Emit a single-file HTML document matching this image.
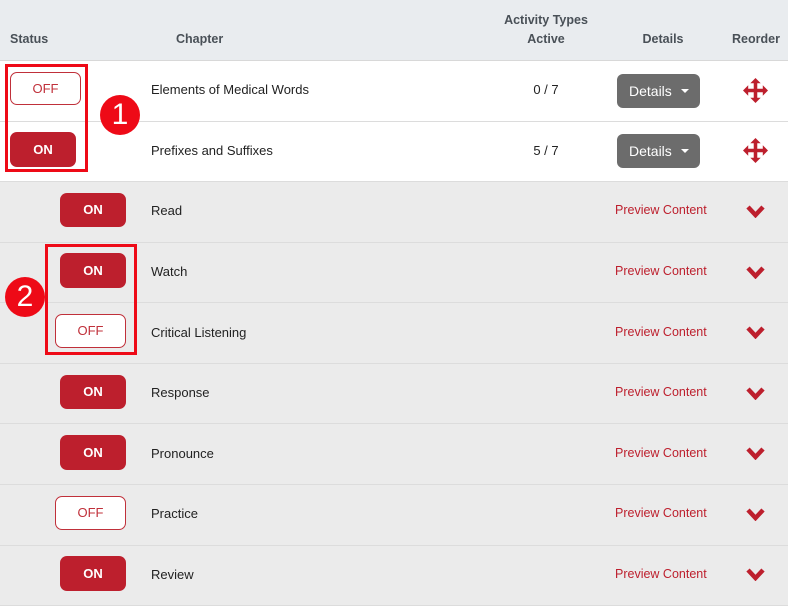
<!DOCTYPE html>
<html><head><style>
*{box-sizing:border-box;margin:0;padding:0}
body{width:788px;height:607px;position:relative;background:#fff;font-family:"Liberation Sans",sans-serif;overflow:hidden}
.a{position:absolute}
.hd{font-size:12.5px;font-weight:bold;color:#495057;text-align:center}
.row{position:absolute;left:0;width:788px;border-bottom:1px solid #dcdcdc}
.t{position:absolute;left:151px;font-size:13px;color:#222}
.on{position:absolute;background:#bd1f2d;color:#fff;font-size:13px;font-weight:bold;text-align:center;border-radius:7px}
.off{position:absolute;background:#fff;color:#c0303a;border:1px solid #c0303a;font-size:13px;text-align:center;border-radius:7px}
.pv{position:absolute;left:615px;font-size:12.5px;color:#bd1f2d}
.det{position:absolute;left:617px;width:83px;height:34px;background:#6c6c6c;border-radius:6px;color:#fff;font-size:14px;line-height:34px;padding-left:12px}
.det:after{content:"";position:absolute;left:64px;top:15px;border-left:4px solid transparent;border-right:4px solid transparent;border-top:4px solid #fff}
.circ{position:absolute;width:40px;height:40px;border-radius:50%;background:#ee0a17;color:#fff;font-size:30px;text-align:center;line-height:40px}
.box{position:absolute;border:3px solid #ee0a17}
</style></head><body>
<div class="a" style="left:0;top:0;width:788px;height:61px;background:#e9ecef;border-bottom:1px solid #d8d8d8"></div>
<div class="a hd" style="left:10px;top:32px;text-align:left">Status</div>
<div class="a hd" style="left:176px;top:32px;text-align:left">Chapter</div>
<div class="a hd" style="left:486px;top:13px;width:120px">Activity Types</div>
<div class="a hd" style="left:486px;top:32px;width:120px">Active</div>
<div class="a hd" style="left:623px;top:32px;width:80px">Details</div>
<div class="a hd" style="left:726px;top:32px;width:60px">Reorder</div>

<div class="row" style="top:61px;height:61px;background:#fff"></div>
<div class="row" style="top:122px;height:60px;background:#fff"></div>
<div class="row" style="top:182px;height:61px;background:#ebebeb"></div>
<div class="row" style="top:243px;height:60px;background:#ebebeb"></div>
<div class="row" style="top:303px;height:61px;background:#ebebeb"></div>
<div class="row" style="top:364px;height:60px;background:#ebebeb"></div>
<div class="row" style="top:424px;height:61px;background:#ebebeb"></div>
<div class="row" style="top:485px;height:61px;background:#ebebeb"></div>
<div class="row" style="top:546px;height:60px;background:#ebebeb"></div>

<div class="off" style="left:10px;top:72px;width:71px;height:33px;line-height:31px">OFF</div>
<div class="on" style="left:10px;top:132px;width:66px;height:35px;line-height:35px">ON</div>
<div class="t" style="top:82px">Elements of Medical Words</div>
<div class="t" style="top:143px">Prefixes and Suffixes</div>
<div class="a" style="left:506px;top:82px;width:80px;text-align:center;font-size:13px;color:#222">0 / 7</div>
<div class="a" style="left:506px;top:143px;width:80px;text-align:center;font-size:13px;color:#222">5 / 7</div>
<div class="det" style="top:74px">Details</div>
<div class="det" style="top:134px">Details</div>
<svg class="a" style="left:743px;top:78px" width="25" height="25" viewBox="0 0 24 24"><path d="M12 0l5 5h-3.3v5.3H19V7l5 5-5 5v-3.3h-5.3V19H17l-5 5-5-5h3.3v-5.3H5V17l-5-5 5-5v3.3h5.3V5H7z" fill="#bd1f2d"/></svg>
<svg class="a" style="left:743px;top:138px" width="25" height="25" viewBox="0 0 24 24"><path d="M12 0l5 5h-3.3v5.3H19V7l5 5-5 5v-3.3h-5.3V19H17l-5 5-5-5h3.3v-5.3H5V17l-5-5 5-5v3.3h5.3V5H7z" fill="#bd1f2d"/></svg>

<div class="on" style="left:60px;top:193px;width:66px;height:34px;line-height:34px">ON</div>
<div class="on" style="left:60px;top:253px;width:66px;height:35px;line-height:35px">ON</div>
<div class="off" style="left:55px;top:314px;width:71px;height:34px;line-height:32px">OFF</div>
<div class="on" style="left:60px;top:375px;width:66px;height:34px;line-height:34px">ON</div>
<div class="on" style="left:60px;top:435px;width:66px;height:35px;line-height:35px">ON</div>
<div class="off" style="left:55px;top:496px;width:71px;height:34px;line-height:32px">OFF</div>
<div class="on" style="left:60px;top:556px;width:66px;height:35px;line-height:35px">ON</div>

<div class="t" style="top:203px">Read</div>
<div class="t" style="top:264px">Watch</div>
<div class="t" style="top:325px">Critical Listening</div>
<div class="t" style="top:385px">Response</div>
<div class="t" style="top:446px">Pronounce</div>
<div class="t" style="top:506px">Practice</div>
<div class="t" style="top:567px">Review</div>

<div class="pv" style="top:203px">Preview Content</div>
<div class="pv" style="top:264px">Preview Content</div>
<div class="pv" style="top:325px">Preview Content</div>
<div class="pv" style="top:385px">Preview Content</div>
<div class="pv" style="top:446px">Preview Content</div>
<div class="pv" style="top:506px">Preview Content</div>
<div class="pv" style="top:567px">Preview Content</div>

<svg class="a" style="left:746px;top:205px" width="19" height="13" viewBox="0 0 19 13"><path d="M2 2l7.5 8L17 2" fill="none" stroke="#bd1f2d" stroke-width="4.5"/></svg>
<svg class="a" style="left:746px;top:266px" width="19" height="13" viewBox="0 0 19 13"><path d="M2 2l7.5 8L17 2" fill="none" stroke="#bd1f2d" stroke-width="4.5"/></svg>
<svg class="a" style="left:746px;top:326px" width="19" height="13" viewBox="0 0 19 13"><path d="M2 2l7.5 8L17 2" fill="none" stroke="#bd1f2d" stroke-width="4.5"/></svg>
<svg class="a" style="left:746px;top:387px" width="19" height="13" viewBox="0 0 19 13"><path d="M2 2l7.5 8L17 2" fill="none" stroke="#bd1f2d" stroke-width="4.5"/></svg>
<svg class="a" style="left:746px;top:447px" width="19" height="13" viewBox="0 0 19 13"><path d="M2 2l7.5 8L17 2" fill="none" stroke="#bd1f2d" stroke-width="4.5"/></svg>
<svg class="a" style="left:746px;top:508px" width="19" height="13" viewBox="0 0 19 13"><path d="M2 2l7.5 8L17 2" fill="none" stroke="#bd1f2d" stroke-width="4.5"/></svg>
<svg class="a" style="left:746px;top:568px" width="19" height="13" viewBox="0 0 19 13"><path d="M2 2l7.5 8L17 2" fill="none" stroke="#bd1f2d" stroke-width="4.5"/></svg>

<div class="box" style="left:5px;top:64px;width:83px;height:108px"></div>
<div class="circ" style="left:100px;top:95px">1</div>
<div class="box" style="left:45px;top:244px;width:92px;height:111px"></div>
<div class="circ" style="left:5px;top:277px">2</div>
</body></html>
